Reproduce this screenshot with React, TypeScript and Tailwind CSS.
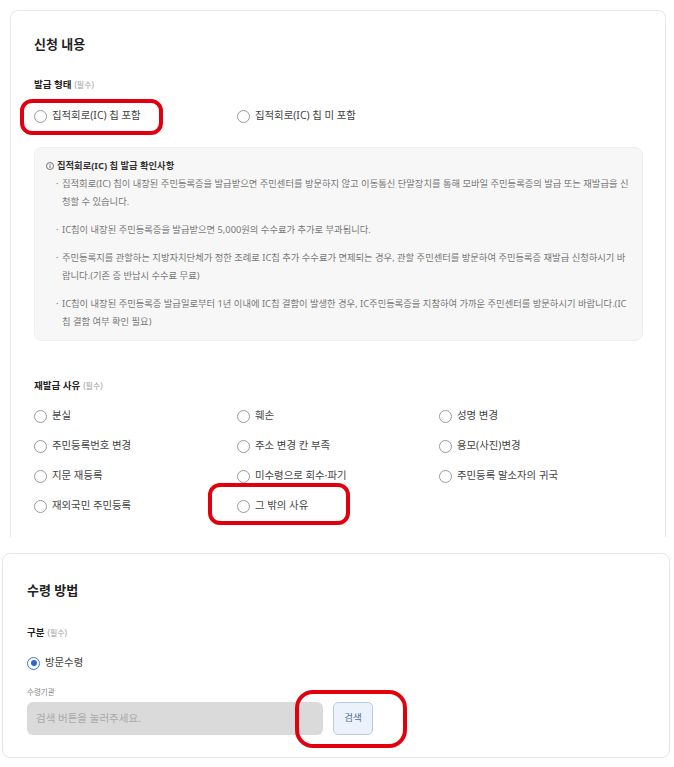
const font = { fontFamily: '"Noto Sans", "Noto Sans CJK KR", sans-serif' };

function Radio({ label, checked = false }: { label: string; checked?: boolean }) {
  return (
    <label className="flex h-[16px] items-center gap-[5px] text-[10.4px] text-[#444]">
      {checked ? (
        <span className="flex h-[13px] w-[13px] items-center justify-center rounded-full border border-[#3b74d6] bg-white">
          <span className="h-[6px] w-[6px] rounded-full bg-[#2f66cc]" />
        </span>
      ) : (
        <span className="h-[13px] w-[13px] rounded-full border border-[#9a9a9a] bg-white" />
      )}
      <span>{label}</span>
    </label>
  );
}

function FieldLabel({ text }: { text: string }) {
  return (
    <div className="flex h-[14px] items-center gap-[3px]">
      <span className="text-[9.5px] font-bold text-[#222]">{text}</span>
      <span className="text-[8px] text-[#9a9a9a]">(필수)</span>
    </div>
  );
}

const notices = [
  "집적회로(IC) 칩이 내장된 주민등록증을 발급받으면 주민센터를 방문하지 않고 이동통신 단말장치를 통해 모바일 주민등록증의 발급 또는 재발급을 신청할 수 있습니다.",
  "IC칩이 내장된 주민등록증을 발급받으면 5,000원의 수수료가 추가로 부과됩니다.",
  "주민등록지를 관할하는 지방자치단체가 정한 조례로 IC칩 추가 수수료가 면제되는 경우, 관할 주민센터를 방문하여 주민등록증 재발급 신청하시기 바랍니다.(기존 증 반납시 수수료 무료)",
  "IC칩이 내장된 주민등록증 발급일로부터 1년 이내에 IC칩 결함이 발생한 경우, IC주민등록증을 지참하여 가까운 주민센터를 방문하시기 바랍니다.(IC칩 결함 여부 확인 필요)",
];

const reasons = [
  "분실",
  "훼손",
  "성명 변경",
  "주민등록번호 변경",
  "주소 변경 칸 부족",
  "용모(사진)변경",
  "지문 재등록",
  "미수령으로 회수·파기",
  "주민등록 말소자의 귀국",
  "재외국민 주민등록",
  "그 밖의 사유",
];

export default function App() {
  return (
    <div className="relative h-[767px] w-[674px] overflow-hidden bg-white" style={font}>
      {/* 신청 내용 */}
      <div className="ml-[10px] mt-[10px] h-[527px] w-[656px] overflow-hidden rounded-t-[8px] border border-b-0 border-[#e8e8e8] pl-[23px] pt-[24px]">
        <h2 className="h-[18px] text-[13px] font-bold leading-[18px] text-[#222]">신청 내용</h2>

        <div className="mt-[25px]">
          <FieldLabel text="발급 형태" />
        </div>
        <div className="mt-[16px] grid grid-cols-[203px_1fr]">
          <Radio label="집적회로(IC) 칩 포함" />
          <Radio label="집적회로(IC) 칩 미 포함" />
        </div>

        <div className="mt-[23px] w-[609px] rounded-[8px] border border-[#efefef] bg-[#f7f7f7] pb-[9px] pl-[11px] pr-[12px] pt-[11px]">
          <div className="flex h-[14px] items-center gap-[3px] text-[9.3px] font-bold text-[#333]">
            <svg width="8" height="8" viewBox="0 0 8 8" className="shrink-0">
              <circle cx="4" cy="4" r="3.5" fill="none" stroke="#555" strokeWidth="0.8" />
              <line x1="4" y1="3.4" x2="4" y2="6" stroke="#555" strokeWidth="0.8" />
              <circle cx="4" cy="2.3" r="0.5" fill="#555" />
            </svg>
            <span>집적회로(IC) 칩 발급 확인사항</span>
          </div>
          <ul className="mt-[2px] flex flex-col gap-[10px] pl-[10px]">
            {notices.map((n) => (
              <li key={n} className="flex text-[9.3px] leading-[18px] text-[#777]">
                <span className="w-[6px] shrink-0">·</span>
                <span>{n}</span>
              </li>
            ))}
          </ul>
        </div>

        <div className="mt-[38px]">
          <FieldLabel text="재발급 사유" />
        </div>
        <div className="mt-[15px] grid grid-cols-[203px_202px_1fr] gap-y-[14px]">
          {reasons.map((r) => (
            <Radio key={r} label={r} />
          ))}
        </div>

        <div className="ml-[3px] mt-[24px] h-px w-[605px] bg-[#e8e8e8]" />
      </div>

      {/* 수령 방법 */}
      <div className="ml-[2px] mt-[16px] h-[205px] w-[668px] rounded-[8px] border border-[#e6e6e6] pl-[24px] pt-[27px]">
        <h2 className="h-[18px] text-[13px] font-bold leading-[18px] text-[#222]">수령 방법</h2>
        <div className="mt-[27px]">
          <FieldLabel text="구분" />
        </div>
        <div className="mt-[15px]">
          <Radio label="방문수령" checked />
        </div>
        <div className="mt-[16px] h-[10px] text-[7.5px] leading-[10px] text-[#888]">수령기관</div>
        <div className="mt-[5px] flex gap-[10px]">
          <div className="flex h-[33px] w-[296px] items-center rounded-[6px] bg-[#dadada] pl-[9px] text-[10.5px] text-[#a9a9a9]">
            검색 버튼을 눌러주세요.
          </div>
          <button className="h-[33px] w-[40px] rounded-[5px] border border-[#b9cbe3] bg-[#ebf2fc] text-[9.5px] text-[#56708f]">
            검색
          </button>
        </div>
      </div>

      {/* red annotation marks */}
      <div className="pointer-events-none absolute left-[20px] top-[99px] h-[36px] w-[143px] rounded-[12px] border-[4px] border-[#e2000f]" />
      <div className="pointer-events-none absolute left-[208px] top-[483px] h-[42px] w-[142px] rounded-[12px] border-[4px] border-[#e2000f]" />
      <div className="pointer-events-none absolute left-[295px] top-[690px] h-[58px] w-[112px] rounded-[18px] border-[4px] border-[#e2000f]" />
    </div>
  );
}
